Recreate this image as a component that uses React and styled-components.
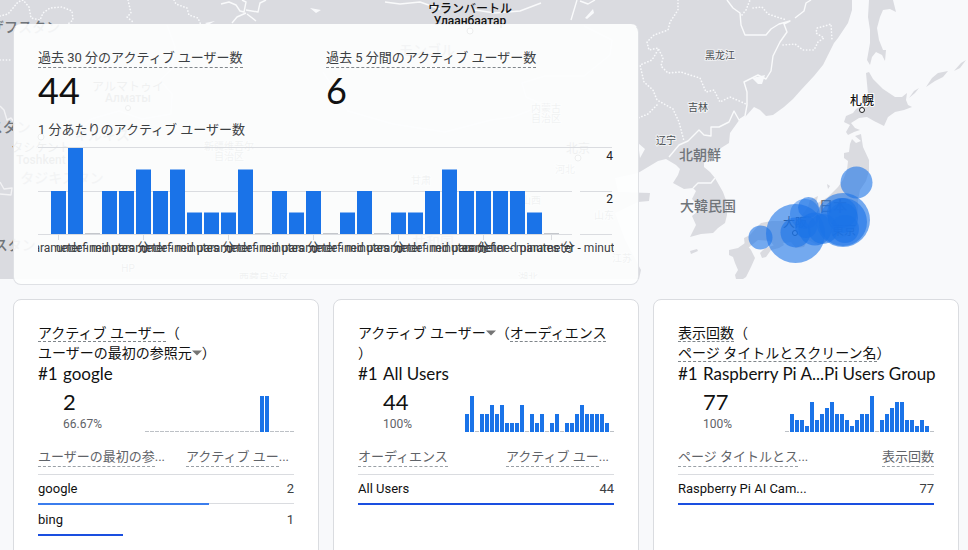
import React from "react";
import styled, { createGlobalStyle } from "styled-components";

const GlobalStyle = createGlobalStyle`
  * {
    box-sizing: border-box;
  }
  body {
    margin: 0;
    background: #f8f9fb;
    color: #111;
    font-family: Roboto, "Noto Sans CJK JP", sans-serif;
  }
`;

const Page = styled.div`
  position: relative;
  height: 100vh;
  overflow-y: auto;
  scrollbar-width: none;
`;

const MapSvg = styled.svg`
  position: absolute;
  top: 0;
  left: 0;
  width: 100%;
  height: 279px;
  display: block;
`;

const Board = styled.main`
  position: relative;
  display: grid;
  grid-template-columns: repeat(3, minmax(0, 1fr));
  gap: 14px;
  padding: 24px 9px 14px 13px;
`;

const Card = styled.section`
  grid-row: 2;
  background: #fff;
  border: 1px solid #dadce0;
  border-radius: 8px;
  padding: 23px 24px;
  min-height: 320px;
`;

const RealtimeCard = styled(Card)`
  grid-row: 1;
  grid-column: span 2;
  min-height: 261px;
  padding: 24px;
  border-color: #dfe1e5;
  border-top-color: transparent;
  background: rgba(253, 254, 254, 0.93);
`;

const Metrics = styled.div`
  display: grid;
  grid-template-columns: 1fr 1fr;
  padding-bottom: 12px;
`;

const MetricLabel = styled.div`
  height: 20px;
  font-size: 13px;
  line-height: 18px;
  color: #3c4043;
`;

const Dashed = styled.span`
  display: inline-block;
  border-bottom: 1px dashed ${(props) => props.$color || "#80868b"};
`;

const MetricValue = styled.div`
  height: 40px;
  font-family: Lato, sans-serif;
  font-size: 36px;
  line-height: 42px;
`;

const ChartTitle = styled.h3`
  margin: 0;
  font-size: 13px;
  font-weight: 400;
  line-height: 18px;
  color: #3c4043;
`;

const MinuteSvg = styled.svg`
  display: block;
  width: 100%;
  height: auto;
  margin-top: 7px;
`;

const CardTitle = styled.h2`
  margin: 0;
  font-size: 14px;
  font-weight: 400;
  line-height: 20px;
`;

const TitleLine = styled.div`
  height: 20px;
  white-space: nowrap;

  ${Dashed} {
    height: 19px;
  }
`;

const Picker = styled.button`
  display: inline-flex;
  align-items: center;
  padding: 0;
  border: 0;
  background: none;
  color: inherit;
  font: inherit;
`;

const Top = styled.div`
  display: grid;
  grid-template-columns: 25px 1fr;
  font-family: Lato, "Noto Sans CJK JP", sans-serif;
  font-size: 17px;
  line-height: 22px;
  white-space: nowrap;
`;

const Summary = styled.div`
  display: flex;
  justify-content: space-between;
  align-items: flex-end;
  padding: 4px 0 0 25px;
`;

const SummaryValue = styled.div`
  font-family: Lato, sans-serif;
  font-size: 22px;
  line-height: 26px;
`;

const SummaryPercent = styled.div`
  font-size: 12px;
  line-height: 18px;
  color: #5f6368;
`;

const SparkSvg = styled.svg`
  display: block;
  flex: none;
  width: 150px;
  height: 37px;
`;

const Table = styled.table`
  width: 100%;
  margin-top: 14px;
  border-collapse: collapse;
  table-layout: fixed;
`;

const Th = styled.th`
  height: 27px;
  padding: 0 ${(props) => (props.$right && props.$more ? "5px" : "0")} 6px 0;
  border-bottom: 1px solid #dadce0;
  font-size: 13px;
  font-weight: 400;
  line-height: 20px;
  color: #5f6368;
  white-space: nowrap;
  text-align: ${(props) => (props.$right ? "right" : "left")};

  ${Dashed} {
    height: 20px;
  }
`;

const Td = styled.td`
  height: 29px;
  padding: 0;
  font-size: 13px;
  white-space: nowrap;
  color: ${(props) => (props.$right ? "#3c4043" : "#111")};
  text-align: ${(props) => (props.$right ? "right" : "left")};
`;

const BarCell = styled.td`
  padding: 0;
`;

const Track = styled.div`
  height: 2px;
  background: linear-gradient(${(props) => (props.$last ? "transparent, transparent" : "#dadce0, #dadce0")}) 0 0 / 100% 1px no-repeat;
`;

const Fill = styled.div`
  height: 2px;
  background: ${(props) => (props.$last ? "#1a4fe0" : "#3b7ded")};
`;

const minutes = [2, 4, 0, 2, 2, 3, 2, 3, 1, 1, 1, 3, 0, 2, 1, 2, 0, 1, 2, 0, 1, 1, 2, 3, 2, 2, 2, 2, 1, 0];
const ticks = [0, 5, 10, 15, 20, 25, 29];

const cards = [
  {
    lines: [
      [{ text: "アクティブ ユーザー", dashed: true }, { text: "（" }],
      [{ text: "ユーザーの最初の参照元", picker: true }, { text: "）" }],
    ],
    name: "google",
    value: "2",
    percent: "66.67%",
    spark: minutes.map((v, i) => (i === 23 || i === 24 ? 1 : 0)),
    head: [{ text: "ユーザーの最初の参", more: true }, { text: "アクティブ ユー", more: true }],
    rows: [["google", 2, 100 / 1.5], ["bing", 1, 100 / 3]],
  },
  {
    lines: [
      [{ text: "アクティブ ユーザー", picker: true }, { text: "（" }, { text: "オーディエンス", dashed: true }],
      [{ text: "）" }],
    ],
    name: "All Users",
    value: "44",
    percent: "100%",
    spark: minutes,
    head: [{ text: "オーディエンス" }, { text: "アクティブ ユー", more: true }],
    rows: [["All Users", 44, 100]],
  },
  {
    lines: [
      [{ text: "表示回数", dashed: true }, { text: "（" }],
      [{ text: "ページ タイトルとスクリーン名", dashed: true }, { text: "）" }],
    ],
    name: "Raspberry Pi A...Pi Users Group",
    value: "77",
    percent: "100%",
    spark: [0, 3, 2, 2, 1, 5, 2, 3, 4, 5, 3, 3, 2, 1, 2, 3, 3, 6, 0, 2, 3, 4, 5, 5, 2, 2, 1, 2, 1, 0],
    head: [{ text: "ページ タイトルとス", more: true }, { text: "表示回数" }],
    rows: [["Raspberry Pi AI Cam...", 77, 100]],
  },
];

function WorldMap() {
  return (
    <MapSvg viewBox="0 0 968 279" preserveAspectRatio="xMidYMin slice" aria-hidden="true">
      <rect width="968" height="279" fill="#f8f9fb" />
      <g fill="#dadbe0">
        {/* mainland and the Korean peninsula */}
        <path d="M0 0H852V10L848 23L838 38L834 43L828 55L823 65L814 76L801 90L793 99L784 107L773 115L766 116L760 110L754 107L746 116L740 119L730 133L729 143L721 148L710 157L704 163V167L710 172L715 178L723 192L727 203V215L725 223L718 228L713 233L701 234L690 237L694 229L696 225L692 216L698 211L697 204L692 199L696 191L693 188L684 189L673 183L678 175L680 169L676 165L666 159L658 161L648 167L638 173L615 178L618 192L650 193L649 201L638 202L615 213L625 240L641 270L639 279H0Z" />
        <path d="M869 0H893L896 12L890 9L883 10L880 17L877 28L879 40L883 50L886 50L885 61L882 55L876 52L872 57L870 65L867 60L870 43V30L868 17Z" />
        <path d="M866 73L869 72L873 79L883 89L895 97L902 97L907 93L906 100L908 105L912 107L904 110L895 112L888 117L884 126L874 121L867 117L859 118L851 123L855 128L860 130L854 132L848 135L846 132L850 125L844 122L846 116L853 113L856 109L865 104L868 94Z" />
        <path d="M852 139L856 143L861 141L855 136L861 134L863 147L869 160V171L866 181L860 190L858 200V217L856 230L845 237L831 240L818 245L808 240L804 247L796 248L791 242L784 243L776 248L770 241L758 240L748 248L745 247L744 238L750 235L756 228L761 223L772 221L784 221L797 222L808 207L810 200L818 196L816 204L828 197L838 187L843 180L847 170L848 161L844 158V153L849 152L850 144Z" />
        <path d="M729 250L738 248L745 243L751 250L755 258L751 267L746 277L743 279H736L735 275L738 270L735 263L733 257L729 255Z" />
        <path d="M760 253L765 248L772 246L782 242L784 245L779 248L771 250L766 257L762 258ZM690 251L697 249L698 251L691 254ZM827 184L830 186L828 189Z" />
        <path d="M966 60L961 63L954 71L960 68ZM948 71L938 73L932 78L926 87L935 81L943 77ZM919 88L914 91L909 98L915 93Z" />
      </g>
      <g fill="none" stroke="#f9fafb" strokeWidth="1.4" strokeLinejoin="round">
        <path d="M727 0L733 8L740 13L741 25L745 35H766L771 29L779 24L790 21L784 24L787 32L780 42L773 56L771 71L766 79L758 75L744 82L747 92V105L745 116L739 120L734 111L729 122L719 127H711V136L704 135L699 130L688 141L679 145L669 157" />
        <path d="M811 0L806 3L804 11L795 18M693 188L698 183H711L715 178" />
        <path d="M221 4L229 2L236 5L240 11L244 12L246 2L242 0M246 13L237 17L232 23M246 10L258 12L260 3L266 0M247 14L256 21" />
        <path d="M577 0L571 20M580 1L588 4L595 0M385 2L400 4L420 2L440 9M475 10L495 13L520 11L541 3" />
        <path d="M0 106L4 110L7 120L11 118L15 123M0 182L4 189L12 188L11 195L0 194M167 25L175 47L172 69L160 80L172 94L171 114L142 119L119 111L91 119L81 128M323 72L348 111L393 124L445 132L491 120L513 117L544 105L526 97L522 83L545 76L584 76L610 55L612 40L584 26" strokeOpacity=".75" />
      </g>
      <g fill="none" stroke="#f8f9fb" strokeWidth="1.6" strokeLinecap="round" strokeDasharray="0.2 3">
        <path d="M0 16L8 14L18 2L23 0L29 7L31 18L40 20L43 13L50 8L62 7L72 11L73 20L68 24M128 0L131 13L127 17L133 22M174 0L176 4L187 8L189 15L198 18L201 25M0 60H12" />
        <path d="M678 0V10L670 22L668 30L654 35L647 42L649 50L658 48L663 58L661 66L668 73L681 72L690 75L700 78L706 92L714 90L720 102L730 97L737 100L746 104M658 50L652 60L640 65L644 82L653 90L657 100L673 109L679 122L684 141M657 105L648 114L638 118" />
        <path d="M742 15L746 10L750 0M753 8L762 7L768 14L780 18L787 20M783 45L795 44L803 50L814 50L818 42L824 38L816 33L817 28L825 26L831 24L832 40" />
      </g>
      <path fill="#f8f9fb" d="M752 78L765 75L762 84H758ZM638 143L645 149L640 158ZM585 18L593 9L594 13L587 19ZM310 8L321 10L316 13ZM205 23L215 21L208 25Z" />
      <g fontFamily='Roboto, "Noto Sans CJK JP", sans-serif' textAnchor="middle">
        <g fontSize="12" fontWeight="500" fill="#111">
          <text x="470" y="13">ウランバートル</text>
          <text x="470" y="25">Улаанбаатар</text>
          <text x="862" y="105" stroke="#fff" strokeWidth="2" paintOrder="stroke">札幌</text>
          <g fontWeight="400" fill="#3c4043">
            <text x="795" y="227">大阪</text>
            <text x="844" y="235">東京</text>
          </g>
        </g>
        <g fontSize="14" fontWeight="500" fill="#70757a">
          <text x="700" y="160">北朝鮮</text>
          <text x="708" y="211">大韓民国</text>
          <text x="833" y="211">日本</text>
          <text x="25" y="32">ザフスタン</text>
          <text x="-18" y="132">ウズベキスタン</text>
          <text x="-20" y="250">トルクメニスタン</text>
          <text x="427" y="55">モンゴル</text>
          <text x="62" y="183">タジキスタン</text>
          <text x="102" y="140">キルギス</text>
          <text x="433" y="247">共和国</text>
        </g>
        <g fontSize="12" fill="#3c4043">
          <text x="128" y="91">アルマトゥイ</text>
          <text x="128" y="102" fontWeight="500">Алматы</text>
          <text x="41" y="152">タシケント</text>
          <text x="41" y="164" fontWeight="500">Toshkent</text>
          <text x="578" y="153">北京</text>
        </g>
        <g fontSize="10" fill="#4a4e52" stroke="#eff0f2" strokeWidth="2" paintOrder="stroke">
          <text x="720" y="59">黑龙江</text>
          <text x="698" y="111">吉林</text>
          <text x="666" y="144">辽宁</text>
          <text x="229" y="150">新疆维吾尔</text>
          <text x="229" y="160">自治区</text>
          <text x="546" y="112">内蒙古</text>
          <text x="546" y="122">自治区</text>
          <text x="565" y="173">河北</text>
          <text x="531" y="204">山西</text>
          <text x="604" y="219">山东</text>
          <text x="421" y="184">甘肃</text>
          <text x="622" y="262">江苏</text>
          <text x="128" y="272">HP</text>
          <text x="528" y="281">湖北</text>
          <text x="264" y="281">西藏自治区</text>
        </g>
      </g>
      <g fill="#f8f9fb" stroke="#222" strokeWidth="1">
        <circle cx="862" cy="110" r="2.5" />
        <circle cx="795" cy="233" r="2.5" />
        <circle cx="470" cy="31" r="3" />
        <circle cx="128" cy="108" r="2.5" />
        <circle cx="41" cy="137" r="3" />
        <circle cx="578" cy="158" r="3" />
      </g>
      <g fill="#1a73e8" fillOpacity=".6">
        <circle cx="856.5" cy="182.5" r="16" />
        <circle cx="760.5" cy="237.5" r="12" />
        <circle cx="795.5" cy="233.5" r="29.5" />
        <circle cx="795.5" cy="232.5" r="15" />
        <circle cx="808.5" cy="207.5" r="10.5" />
        <circle cx="805" cy="214" r="15" fillOpacity=".45" />
        <circle cx="815" cy="229" r="16.5" />
        <circle cx="806" cy="227" r="11" />
        <circle cx="823" cy="229" r="15" />
        <circle cx="843" cy="220" r="27" />
        <circle cx="843" cy="222" r="24" />
        <circle cx="842" cy="213" r="15" />
        <circle cx="843" cy="218" r="15" />
        <circle cx="845" cy="229" r="14" />
      </g>
    </MapSvg>
  );
}

function MinuteChart() {
  return (
    <MinuteSvg viewBox="0 0 576 110" role="img" aria-label="1 分あたりのアクティブ ユーザー数">
      <g stroke="#dadce0">
        <path d="M0 1.5H574M0 45.5H534M542 45.5H574M0 88.5H534M542 88.5H574" />
        {ticks.map((i) => (
          <path key={i} d={`M${20.5 + i * 17} 89V94`} />
        ))}
      </g>
      {minutes.map((v, i) => (
        <rect
          key={i}
          x={13 + i * 17}
          y={v ? 88 - v * 21.5 : 87}
          width="15"
          height={v ? v * 21.5 : 1}
          fill={v ? "#1a73e8" : "#c4c7cc"}
        />
      ))}
      <g fill="#202124" fontSize="12" textAnchor="end">
        <text x="575" y="14">4</text>
        <text x="575" y="57">2</text>
      </g>
      <g fill="#3c4043" fontSize="12" textAnchor="middle">
        {ticks.map((i) => (
          <text key={i} x={22 + i * 17} y="106">
            undefined parameter - minutes 分
          </text>
        ))}
      </g>
    </MinuteSvg>
  );
}

function Spark({ data }) {
  const max = Math.max(...data);
  return (
    <SparkSvg viewBox="0 0 150 37" aria-hidden="true">
      {data.map((v, i) => (
        <rect
          key={i}
          x={i * 5 + 1}
          y={v ? 36 - (v / max) * 36 : 35}
          width="4"
          height={v ? (v / max) * 36 : 1}
          fill={v ? "#1a73e8" : "#bdc1c6"}
        />
      ))}
    </SparkSvg>
  );
}

function TitlePart({ part }) {
  if (part.picker) {
    return (
      <Picker type="button">
        {part.text}
        <svg width="10" height="6" viewBox="0 0 10 6" aria-hidden="true">
          <path d="M0 0.5H10L5 5.5Z" fill="#757575" />
        </svg>
      </Picker>
    );
  }
  return part.dashed ? <Dashed>{part.text}</Dashed> : part.text;
}

function ReportCard({ card }) {
  return (
    <Card>
      <CardTitle>
        {card.lines.map((line, i) => (
          <TitleLine key={i}>
            {line.map((part) => (
              <TitlePart key={part.text} part={part} />
            ))}
          </TitleLine>
        ))}
      </CardTitle>
      <Top>
        <span>#1</span>
        <span>{card.name}</span>
      </Top>
      <Summary>
        <div>
          <SummaryValue>{card.value}</SummaryValue>
          <SummaryPercent>{card.percent}</SummaryPercent>
        </div>
        <Spark data={card.spark} />
      </Summary>
      <Table>
        <thead>
          <tr>
            {card.head.map((h, i) => (
              <Th key={i} $right={i === 1} $more={h.more}>
                <Dashed $color="#9aa0a6">{h.text}</Dashed>
                {h.more && "..."}
              </Th>
            ))}
          </tr>
        </thead>
        <tbody>
          {card.rows.map(([name, value, share], i) => {
            const last = i === card.rows.length - 1;
            return (
              <React.Fragment key={name}>
                <tr>
                  <Td>{name}</Td>
                  <Td $right>{value}</Td>
                </tr>
                <tr>
                  <BarCell colSpan={2}>
                    <Track $last={last}>
                      <Fill $last={last} style={{ width: `${share}%` }} />
                    </Track>
                  </BarCell>
                </tr>
              </React.Fragment>
            );
          })}
        </tbody>
      </Table>
    </Card>
  );
}

function App() {
  return (
    <Page>
      <GlobalStyle />
      <WorldMap />
      <Board>
        <RealtimeCard>
          <Metrics>
            <div>
              <MetricLabel>
                <Dashed>過去 30 分のアクティブ ユーザー数</Dashed>
              </MetricLabel>
              <MetricValue>44</MetricValue>
            </div>
            <div>
              <MetricLabel>
                <Dashed>過去 5 分間のアクティブ ユーザー数</Dashed>
              </MetricLabel>
              <MetricValue>6</MetricValue>
            </div>
          </Metrics>
          <ChartTitle>1 分あたりのアクティブ ユーザー数</ChartTitle>
          <MinuteChart />
        </RealtimeCard>
        {cards.map((card) => (
          <ReportCard key={card.name} card={card} />
        ))}
      </Board>
    </Page>
  );
}

export default App;
